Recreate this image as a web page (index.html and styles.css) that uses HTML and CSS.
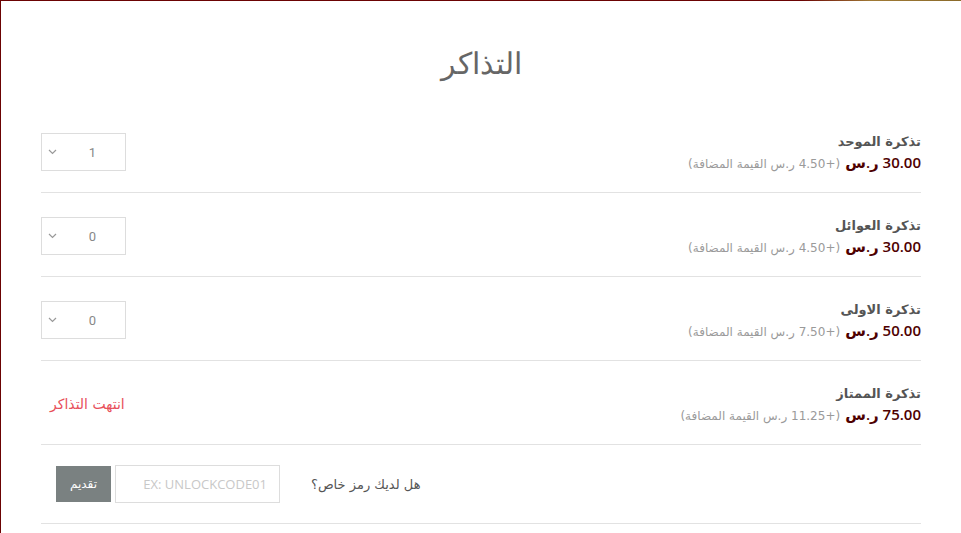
FILE: index.html
```html
<!DOCTYPE html>
<html lang="ar" dir="rtl">
<head>
    <meta charset="UTF-8">
    <meta name="viewport" content="width=device-width, initial-scale=1.0">
    <title>التذاكر</title>
    <link rel="stylesheet" href="styles.css">
</head>
<body>
    <div class="page">
        <h1 class="title">التذاكر</h1>

        <div class="ticket">
            <div class="ticket-info">
                <div class="ticket-name">تذكرة الموحد</div>
                <div class="ticket-price"><span class="price">30.00 ر.س</span> <span class="vat">(+4.50 ر.س القيمة المضافة)</span></div>
            </div>
            <select class="qty">
                <option>0</option>
                <option selected>1</option>
                <option>2</option>
            </select>
        </div>

        <div class="ticket">
            <div class="ticket-info">
                <div class="ticket-name">تذكرة العوائل</div>
                <div class="ticket-price"><span class="price">30.00 ر.س</span> <span class="vat">(+4.50 ر.س القيمة المضافة)</span></div>
            </div>
            <select class="qty">
                <option selected>0</option>
                <option>1</option>
                <option>2</option>
            </select>
        </div>

        <div class="ticket">
            <div class="ticket-info">
                <div class="ticket-name">تذكرة الاولى</div>
                <div class="ticket-price"><span class="price">50.00 ر.س</span> <span class="vat">(+7.50 ر.س القيمة المضافة)</span></div>
            </div>
            <select class="qty">
                <option selected>0</option>
                <option>1</option>
                <option>2</option>
            </select>
        </div>

        <div class="ticket">
            <div class="ticket-info">
                <div class="ticket-name">تذكرة الممتاز</div>
                <div class="ticket-price"><span class="price">75.00 ر.س</span> <span class="vat">(+11.25 ر.س القيمة المضافة)</span></div>
            </div>
            <div class="sold-out">انتهت التذاكر</div>
        </div>

        <div class="promo">
            <label class="promo-label" for="code">هل لديك رمز خاص؟</label>
            <input type="text" id="code" class="promo-input" placeholder="EX: UNLOCKCODE01">
            <button class="promo-btn">تقديم</button>
        </div>
    </div>
</body>
</html>
```

FILE: styles.css
```css
body {
    margin: 0;
    background: linear-gradient(to left, #8a6a2a 0, #a07a35 90px, #6b0303 160px, #6b0303 100%);
    font-family: "DejaVu Sans", "Noto Sans", sans-serif;
    color: #555;
}
.page {
    margin: 1px 0 0 1px;
    background-color: white;
    min-height: 532px;
    padding: 0 40px 0 40px;
}
.title {
    margin: 0;
    height: 108px;
    line-height: 126px;
    text-align: center;
    font-size: 30px;
    font-weight: 300;
    color: #666;
}
.ticket {
    display: flex;
    justify-content: space-between;
    align-items: center;
    padding: 24px 0 21px;
    border-bottom: 1px solid #e2e2e2;
}
.ticket-info {
    height: 38px;
}
.ticket-name {
    font-size: 13px;
    font-weight: bold;
    color: #555;
    line-height: 18px;
}
.ticket-price {
    line-height: 22px;
}
.price {
    font-family: "Open Sans", "DejaVu Sans", sans-serif;
    font-size: 15px;
    font-weight: 600;
    color: #4e0000;
}
.vat {
    font-size: 12px;
    color: #9a9a9a;
}
.qty {
    appearance: none;
    width: 85px;
    height: 38px;
    border: 1px solid #ddd;
    background: white url("data:image/svg+xml,%3Csvg xmlns='http://www.w3.org/2000/svg' width='9' height='6' viewBox='0 0 9 6'%3E%3Cpath d='M1 1l3.5 3.5L8 1' fill='none' stroke='%23999' stroke-width='1.2'/%3E%3C/svg%3E") no-repeat 6px center;
    padding: 0 0 0 18px;
    text-align: center;
    text-align-last: center;
    font-family: "Roboto", sans-serif;
    font-size: 13px;
    color: #888;
}
.sold-out {
    font-size: 14px;
    color: #e8505b;
    padding-left: 9px;
}
.promo {
    display: flex;
    justify-content: flex-end;
    align-items: center;
    padding: 20px 0 20px 15px;
    border-bottom: 1px solid #e2e2e2;
}
.promo-label {
    font-size: 13px;
    color: #555;
    margin-left: 31px;
}
.promo-input {
    width: 165px;
    height: 38px;
    box-sizing: border-box;
    border: 1px solid #ddd;
    padding: 0 12px;
    font-family: "Open Sans", sans-serif;
    font-size: 13px;
    margin-left: 4px;
}
.promo-input::placeholder {
    color: #c8c8c8;
}
.promo-btn {
    width: 55px;
    height: 36px;
    border: none;
    background-color: #7a8181;
    color: white;
    font-family: "DejaVu Sans", sans-serif;
    font-size: 12px;
    cursor: pointer;
}
```
